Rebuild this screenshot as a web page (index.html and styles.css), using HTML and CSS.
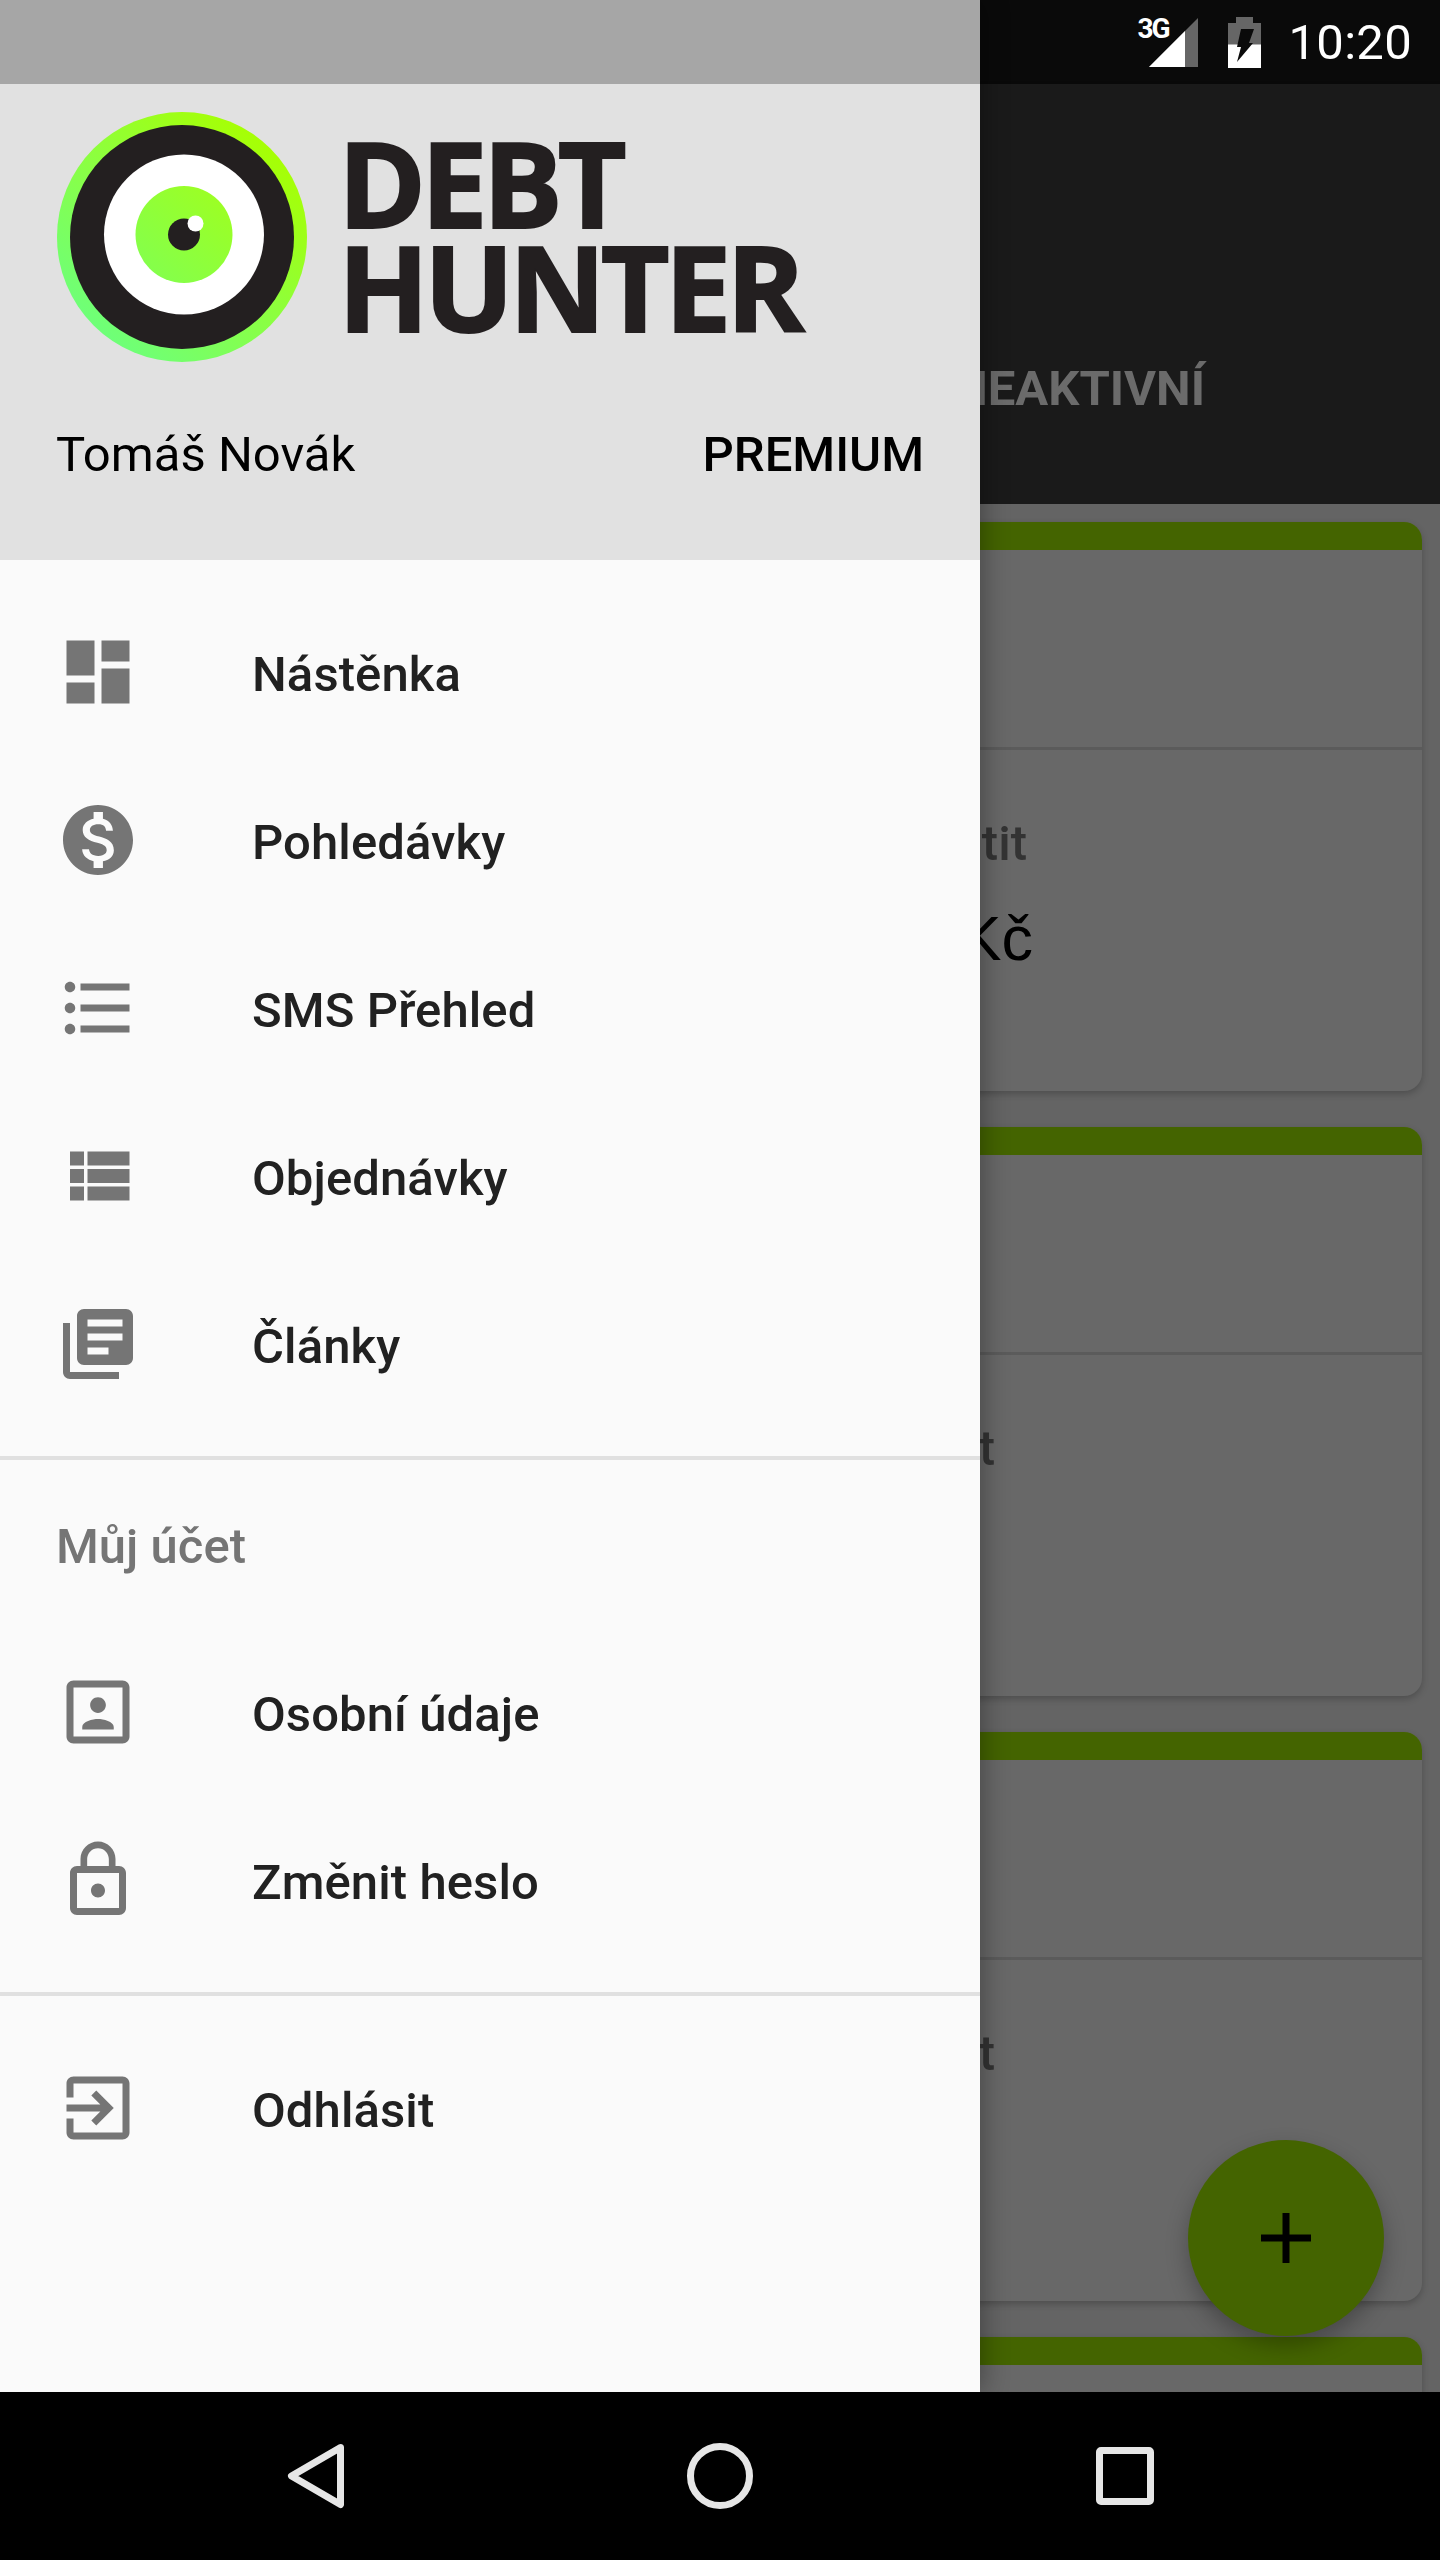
FILE: index.html
```html
<!DOCTYPE html>
<html lang="cs">
<head>
<meta charset="utf-8">
<title>Debt Hunter</title>
<link rel="stylesheet" href="styles.css">
</head>
<body>
<div class="screen">
  <div class="stage">
    <div class="behind">
      <div class="statusbar">
        <div class="signal">
          <span class="net">3G</span>
          <svg class="signal-icon" width="49" height="49" viewBox="0 0 49 49"><polygon points="0,49 49,49 49,0" fill="#666"/><polygon points="0,49 36,49 36,13" fill="#fff"/></svg>
        </div>
        <svg class="battery" width="33" height="51" viewBox="0 0 33 51"><path d="M8 0h17v6h8v22H0V6h8z" fill="#666"/><rect y="27.5" width="33" height="23.5" fill="#fff"/><polygon points="13,12 26,12 21,26 25,26 9,45 13,30 9,30" fill="#0a0a0a"/></svg>
        <span class="clock">10:20</span>
      </div>
      <div class="toolbar"></div>
      <div class="tabs"><span class="tab">NEAKTIVNÍ</span></div>
      <div class="cards">
        <article class="card">
          <div class="card-top"></div>
          <div class="card-body">
            <span class="card-label">Zaplatit</span>
            <span class="card-amount">1 200 Kč</span>
          </div>
        </article>
        <article class="card">
          <div class="card-top"></div>
          <div class="card-body"><span class="card-label card-label-short">Zaplatit</span></div>
        </article>
        <article class="card">
          <div class="card-top"></div>
          <div class="card-body"><span class="card-label card-label-short">Zaplatit</span></div>
        </article>
        <article class="card">
          <div class="card-top"></div>
        </article>
      </div>
      <div class="fab">
        <svg width="50" height="50" viewBox="0 0 50 50"><path d="M21.5 0h7v21.5H50v7H28.5V50h-7V28.5H0v-7h21.5z" fill="#000"/></svg>
      </div>
    </div>

    <aside class="drawer">
      <div class="drawer-status"></div>
      <header class="drawer-head">
        <div class="brand">
          <svg class="brand-mark" width="250" height="250" viewBox="0 0 250 250">
            <defs>
              <linearGradient id="ring" x1="0.15" y1="0.9" x2="0.85" y2="0.1"><stop offset="0" stop-color="#6cff7c"/><stop offset="0.5" stop-color="#8cff40"/><stop offset="1" stop-color="#a8ff00"/></linearGradient>
              <linearGradient id="iris" x1="0.15" y1="0.9" x2="0.85" y2="0.1"><stop offset="0" stop-color="#84ff4c"/><stop offset="1" stop-color="#9cff24"/></linearGradient>
            </defs>
            <circle cx="125" cy="125" r="125" fill="url(#ring)"/>
            <circle cx="125" cy="125" r="112" fill="#231f20"/>
            <circle cx="127" cy="122.5" r="80" fill="#fff"/>
            <circle cx="127" cy="122.5" r="48.5" fill="url(#iris)"/>
            <circle cx="127" cy="122.5" r="16" fill="#231f20"/>
            <circle cx="138.5" cy="111.5" r="8" fill="#fff"/>
          </svg>
          <div class="brand-name"><span>DEBT</span><span>HUNTER</span></div>
        </div>
        <div class="account">
          <span class="account-name">Tomáš Novák</span>
          <span class="account-plan">PREMIUM</span>
        </div>
      </header>
      <nav class="drawer-body">
        <ul class="menu">
          <li class="item"><svg class="icon" viewBox="0 0 24 24"><path d="M3 13h8V3H3v10zm0 8h8v-6H3v6zm10 0h8V11h-8v10zm0-18v6h8V3h-8z"/></svg><span class="item-label">Nástěnka</span></li>
          <li class="item"><svg class="icon" viewBox="0 0 24 24"><path d="M12 2C6.48 2 2 6.48 2 12s4.48 10 10 10 10-4.48 10-10S17.52 2 12 2zm1.41 16.09V20h-2.67v-1.93c-1.71-.36-3.16-1.46-3.27-3.4h1.96c.1 1.05.82 1.87 2.65 1.87 1.96 0 2.4-.98 2.4-1.59 0-.83-.44-1.61-2.67-2.14-2.48-.6-4.18-1.62-4.18-3.67 0-1.72 1.39-2.84 3.11-3.21V4h2.67v1.95c1.86.45 2.79 1.86 2.85 3.39H14.3c-.05-1.11-.64-1.87-2.22-1.87-1.5 0-2.4.68-2.4 1.64 0 .84.65 1.39 2.67 1.91s4.18 1.39 4.18 3.91c-.01 1.83-1.38 2.83-3.12 3.16z"/></svg><span class="item-label">Pohledávky</span></li>
          <li class="item"><svg class="icon" viewBox="0 0 24 24"><path d="M4 10.5c-.83 0-1.5.67-1.5 1.5s.67 1.5 1.5 1.5 1.5-.67 1.5-1.5-.67-1.5-1.5-1.5zm0-6c-.83 0-1.5.67-1.5 1.5S3.17 7.5 4 7.5 5.5 6.83 5.5 6 4.83 4.5 4 4.5zm0 12c-.83 0-1.5.68-1.5 1.5s.68 1.5 1.5 1.5 1.5-.68 1.5-1.5-.67-1.5-1.5-1.5zM7 19h14v-2H7v2zm0-6h14v-2H7v2zm0-8v2h14V5H7z"/></svg><span class="item-label">SMS Přehled</span></li>
          <li class="item"><svg class="icon" viewBox="0 0 24 24"><path d="M4 14h4v-4H4v4zm0 5h4v-4H4v4zM4 9h4V5H4v4zm5 5h12v-4H9v4zm0 5h12v-4H9v4zM9 5v4h12V5H9z"/></svg><span class="item-label">Objednávky</span></li>
          <li class="item"><svg class="icon" viewBox="0 0 24 24"><path d="M4 6H2v14c0 1.1.9 2 2 2h14v-2H4V6zm16-4H8c-1.1 0-2 .9-2 2v12c0 1.1.9 2 2 2h12c1.1 0 2-.9 2-2V4c0-1.1-.9-2-2-2zm-1 9H9V9h10v2zm-4 4H9v-2h6v2zm4-8H9V5h10v2z"/></svg><span class="item-label">Články</span></li>
        </ul>
        <div class="section-title">Můj účet</div>
        <ul class="menu menu-account">
          <li class="item"><svg class="icon" viewBox="0 0 24 24"><path d="M12 12.25c1.24 0 2.25-1.01 2.25-2.25S13.24 7.75 12 7.75 9.75 8.76 9.75 10s1.01 2.25 2.25 2.25zm4.5 4c0-1.5-3-2.25-4.5-2.25s-4.5.75-4.5 2.25V17h9v-.75zM19 3H5c-1.1 0-2 .9-2 2v14c0 1.1.9 2 2 2h14c1.1 0 2-.9 2-2V5c0-1.1-.9-2-2-2zm0 16H5V5h14v14z"/></svg><span class="item-label">Osobní údaje</span></li>
          <li class="item"><svg class="icon" viewBox="0 0 24 24"><path d="M12 17c1.1 0 2-.9 2-2s-.9-2-2-2-2 .9-2 2 .9 2 2 2zm6-9h-1V6c0-2.76-2.24-5-5-5S7 3.24 7 6v2H6c-1.1 0-2 .9-2 2v10c0 1.1.9 2 2 2h12c1.1 0 2-.9 2-2V10c0-1.1-.9-2-2-2zM8.9 6c0-1.71 1.39-3.1 3.1-3.1s3.1 1.39 3.1 3.1v2H8.9V6zM18 20H6V10h12v10z"/></svg><span class="item-label">Změnit heslo</span></li>
        </ul>
        <ul class="menu menu-exit">
          <li class="item"><svg class="icon" viewBox="0 0 24 24"><path d="M10.09 15.59L11.5 17l5-5-5-5-1.41 1.41L12.67 11H3v2h9.67l-2.58 2.59zM19 3H5c-1.11 0-2 .9-2 2v4h2V5h14v14H5v-4H3v4c0 1.1.89 2 2 2h14c1.1 0 2-.9 2-2V5c0-1.1-.9-2-2-2z"/></svg><span class="item-label">Odhlásit</span></li>
        </ul>
      </nav>
    </aside>
  </div>

  <div class="navbar">
    <svg class="nav-btn" width="84" height="84" viewBox="0 0 84 84"><path d="M67.5 13.5 L18.5 42 L67.5 70.5 Z" class="nav-shape"/></svg>
    <svg class="nav-btn" width="84" height="84" viewBox="0 0 84 84"><circle cx="42" cy="42" r="29.5" class="nav-shape"/></svg>
    <svg class="nav-btn" width="84" height="84" viewBox="0 0 84 84"><rect x="16.5" y="16.5" width="51" height="51" rx="1.5" class="nav-shape"/></svg>
  </div>
</div>
</body>
</html>
```

FILE: styles.css
```css
* { box-sizing: border-box; }

html, body {
  margin: 0;
  padding: 0;
  background: #000;
}

body {
  font-family: Roboto, "Noto Sans", sans-serif;
}

.screen {
  width: 1440px;
  height: 2560px;
  display: flex;
  flex-direction: column;
  overflow: hidden;
}

.stage {
  position: relative;
  flex: 0 0 2392px;
  height: 2392px;
  overflow: hidden;
}

/* Page dimmed behind the drawer */
.behind {
  position: relative;
  height: 100%;
  background: #646464;
  display: flex;
  flex-direction: column;
  overflow: hidden;
}

.statusbar {
  flex: 0 0 84px;
  background: #0a0a0a;
  display: flex;
  align-items: center;
  justify-content: flex-end;
  padding-right: 28px;
  color: #fff;
}

.signal {
  position: relative;
  width: 61px;
  height: 49px;
  margin-right: 30px;
  display: flex;
  justify-content: flex-end;
}

.net {
  position: absolute;
  left: 0;
  top: -3px;
  font-size: 28px;
  line-height: 28px;
  font-weight: 700;
  letter-spacing: -2px;
}

.signal-icon, .battery { display: block; }

.battery { margin-right: 27px; }

.clock {
  font-size: 49px;
  line-height: 57px;
  letter-spacing: 0.3px;
}

.toolbar {
  flex: 0 0 196px;
  background: #1a1a1a;
  box-shadow: 0 1px 4px rgba(0, 0, 0, 0.15);
}

.tabs {
  flex: 0 0 224px;
  background: #1a1a1a;
  display: flex;
  align-items: center;
  justify-content: flex-end;
  padding: 0 235px 8px 0;
}

.tab {
  font-size: 49px;
  line-height: 57px;
  font-weight: 700;
  color: #6b6b6b;
  white-space: nowrap;
}

.cards {
  padding: 18px 18px 0 28px;
  display: flex;
  flex-direction: column;
  gap: 36px;
}

.card {
  flex: 0 0 569px;
  height: 569px;
  background: #686868;
  border-radius: 18px;
  box-shadow: 0 3px 7px rgba(0, 0, 0, 0.22);
}

.card-top {
  height: 228px;
  background: linear-gradient(#446400 28px, #686868 28px);
  border-bottom: 3px solid #5b5b5b;
  border-radius: 18px 18px 0 0;
}

.card-body {
  width: 1005px;
  padding-top: 65px;
  display: flex;
  flex-direction: column;
  align-items: flex-end;
}

.card-label {
  font-size: 49px;
  line-height: 57px;
  font-weight: 500;
  color: #333;
  margin-right: 6px;
}

.card-label-short { margin-right: 38px; }

.card-amount {
  margin-top: 30px;
  font-family: "Liberation Sans", Arial, sans-serif;
  font-size: 63px;
  line-height: 72px;
  color: #000;
  white-space: nowrap;
}

.fab {
  position: absolute;
  right: 56px;
  bottom: 56px;
  width: 196px;
  height: 196px;
  border-radius: 50%;
  background: #446400;
  display: flex;
  align-items: center;
  justify-content: center;
  box-shadow: 0 10px 22px rgba(0, 0, 0, 0.28);
}

.fab svg { display: block; }

/* Navigation drawer */
.drawer {
  position: absolute;
  left: 0;
  top: 0;
  bottom: 0;
  width: 980px;
  display: flex;
  flex-direction: column;
  background: #fafafa;
  box-shadow: 4px 0 24px rgba(0, 0, 0, 0.3);
}

.drawer-status {
  flex: 0 0 84px;
  background: #a6a6a6;
}

.drawer-head {
  flex: 0 0 476px;
  background: #e1e1e1;
  padding: 28px 56px 0 57px;
  display: flex;
  flex-direction: column;
}

.brand {
  display: flex;
  align-items: center;
  gap: 31px;
}

.brand-mark { display: block; flex: none; }

.brand-name {
  display: flex;
  flex-direction: column;
  margin-top: -6px;
  font-family: "Open Sans", "Noto Sans", sans-serif;
  font-weight: 700;
  font-size: 119px;
  line-height: 104px;
  color: #231f20;
  letter-spacing: -5px;
  -webkit-text-stroke: 2px #231f20;
  paint-order: stroke fill;
}

.account {
  margin-top: 64px;
  display: flex;
  justify-content: space-between;
  align-items: center;
  font-size: 49px;
  line-height: 57px;
  color: #000;
}

.account-name { margin-left: -1px; }

.account-plan { font-weight: 500; }

.drawer-body {
  flex: 1;
  display: flex;
  flex-direction: column;
}

.menu {
  list-style: none;
  margin: 0;
  padding: 28px 0;
}

.menu-account {
  padding-top: 0;
  border-bottom: 4px solid #e0e0e0;
}

.item {
  height: 168px;
  display: flex;
  align-items: center;
  padding-left: 56px;
  font-size: 49px;
  font-weight: 500;
  color: #212121;
}

.item-label {
  padding-top: 4px;
  letter-spacing: 0.1px;
}

.icon {
  width: 84px;
  height: 84px;
  flex: none;
  margin-right: 112px;
  fill: #757575;
}

.section-title {
  height: 172px;
  border-top: 4px solid #e0e0e0;
  display: flex;
  align-items: center;
  padding: 4px 0 0 56px;
  font-size: 49px;
  font-weight: 500;
  color: #757575;
}

/* System navigation bar */
.navbar {
  flex: 0 0 168px;
  background: #000;
  display: flex;
  align-items: center;
  justify-content: center;
  gap: 321px;
}

.nav-btn { display: block; }

.nav-shape {
  fill: none;
  stroke: #e6e6e6;
  stroke-width: 7px;
  stroke-linejoin: round;
}
```
